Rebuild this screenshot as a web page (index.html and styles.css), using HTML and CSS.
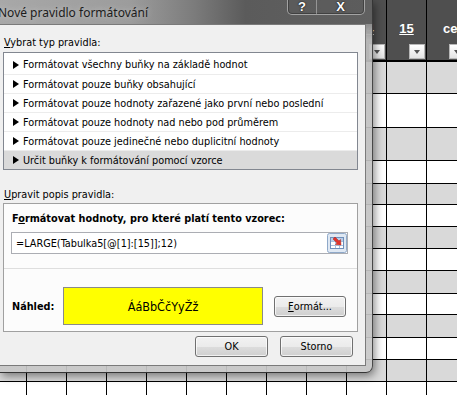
FILE: index.html
```html
<!DOCTYPE html>
<html lang="cs">
<head>
  <meta charset="UTF-8">
  <title>Nové pravidlo formátování</title>
  <link rel="stylesheet" href="styles.css">
</head>
<body>
  <!-- spreadsheet behind the dialog -->
  <div class="sheet">
    <div class="sheet-head">
      <div class="col-head">
        <span class="col-name">14</span>
        <span class="filter"></span>
      </div>
      <div class="col-head">
        <span class="col-name">15</span>
        <span class="filter"></span>
      </div>
      <div class="col-head wide">
        <span class="col-name">ce</span>
        <span class="filter"></span>
      </div>
    </div>
    <div class="row gray h32"></div>
    <div class="row white h34"></div>
    <div class="row gray h33"></div>
    <div class="row white h23"></div>
    <div class="row gray h21"></div>
    <div class="row white"></div>
    <div class="row gray"></div>
    <div class="row white"></div>
    <div class="row gray h23"></div>
    <div class="row white h21"></div>
    <div class="row gray h23"></div>
    <div class="row white"></div>
    <div class="row gray"></div>
    <div class="row white"></div>
  </div>

  <div class="dialog">
    <div class="titlebar">
      <span class="title">Nové pravidlo formátování</span>
      <div class="caption-btns">
        <span class="cap-btn help">?</span>
        <span class="cap-btn close">X</span>
      </div>
    </div>

    <div class="client">
      <div class="label"><u>V</u>ybrat typ pravidla:</div>
      <div class="rule-list">
        <div class="rule">Formátovat všechny buňky na základě hodnot</div>
        <div class="rule">Formátovat pouze buňky obsahující</div>
        <div class="rule">Formátovat pouze hodnoty zařazené jako první nebo poslední</div>
        <div class="rule">Formátovat pouze hodnoty nad nebo pod průměrem</div>
        <div class="rule">Formátovat pouze jedinečné nebo duplicitní hodnoty</div>
        <div class="rule selected">Určit buňky k formátování pomocí vzorce</div>
      </div>

      <div class="label second"><u>U</u>pravit popis pravidla:</div>
      <div class="group">
        <div class="group-title">F<u>o</u>rmátovat hodnoty, pro které platí tento vzorec:</div>
        <div class="formula">
          <span class="formula-text">=LARGE(Tabulka5[@[1]:[15]];12)</span>
          <span class="ref-btn">
            <svg width="20" height="20" viewBox="0 0 20 20">
              <rect x="0.5" y="0.5" width="19" height="19" rx="2" fill="#dfe8f3" stroke="#8fa9c9"/>
              <rect x="3.5" y="4.5" width="13" height="11" fill="#fff" stroke="#6f8fbb"/>
              <path d="M4 8.5h12M4 12.5h12" stroke="#a9c0dd"/>
              <path d="M8.5 5v10M12.5 5v10" stroke="#a9c0dd"/>
              <rect x="4" y="5" width="12" height="3" fill="#b9cde6"/>
              <path d="M6 6 L8 4 L12 8 L13.5 6.5 L14 12 L8.5 11.5 L10 10 Z" fill="#e0342c" stroke="#a8221c" stroke-width="0.5"/>
            </svg>
          </span>
        </div>
        <div class="separator"></div>
        <div class="preview-row">
          <span class="preview-label">Náhled:</span>
          <div class="preview">ÁáBbČčYyŽž</div>
          <button class="btn format-btn"><u>F</u>ormát...</button>
        </div>
      </div>

      <div class="actions">
        <button class="btn">OK</button>
        <button class="btn">Storno</button>
      </div>
    </div>
  </div>
</body>
</html>
```

FILE: styles.css
```css
* {
  box-sizing: border-box;
}
body {
  margin: 0;
  width: 457px;
  height: 395px;
  overflow: hidden;
  position: relative;
  background: #ffffff;
  font-family: "DejaVu Sans Condensed", "DejaVu Sans", sans-serif;
  font-stretch: condensed;
  font-size: 10.8px;
  color: #000000;
}

/* spreadsheet */
.sheet {
  width: 457px;
}
.sheet-head {
  display: flex;
  height: 62px;
  padding-left: 347px;
  border-bottom: 2px solid #000000;
  background: linear-gradient(90deg, #000000 0 1px, transparent 1px) 26px 0 / 40px 100% repeat-x, #4f4f4f;
}
.col-head {
  flex: none;
  width: 40px;
  display: flex;
  flex-direction: column;
  align-items: center;
  color: #ffffff;
  font: bold 13px "Liberation Sans", Arial, sans-serif;
}
.col-name {
  padding-top: 21px;
  padding-right: 1px;
  text-decoration: underline;
}
.col-head.wide {
  align-items: flex-start;
}
.col-head.wide .col-name {
  padding-left: 16px;
  text-decoration: none;
}
.filter {
  position: relative;
  margin-top: auto;
  margin-bottom: 1px;
  margin-right: 2px;
  align-self: flex-end;
  width: 16px;
  height: 15px;
  border: 1px solid #b8b8b8;
  background: linear-gradient(#ffffff, #e4e4e4);
}
.filter::after {
  content: "";
  position: absolute;
  left: 4px;
  top: 5px;
  border-left: 3.5px solid transparent;
  border-right: 3.5px solid transparent;
  border-top: 4px solid #555555;
}
.row {
  height: 22px;
  border-bottom: 1px solid #000000;
  background-image: linear-gradient(90deg, #000000 0 1px, transparent 1px);
  background-position: 26px 0;
  background-size: 40px 100%;
  background-repeat: repeat-x;
}
.row.gray {
  background-color: #d9d9d9;
}
.row.white {
  background-color: #ffffff;
}
.h21 { height: 21px; }
.h23 { height: 23px; }
.h32 { height: 32px; }
.h33 { height: 33px; }
.h34 { height: 34px; }

/* dialog window */
.dialog {
  position: absolute;
  left: 0;
  top: 0;
  width: 373px;
  padding: 0 7px 6px 0;
  border-right: 1px solid rgba(40, 40, 40, 0.8);
  border-bottom: 1px solid rgba(40, 40, 40, 0.8);
  border-radius: 0 0 7px 0;
  background: linear-gradient(180deg, #6a6a6a 0, #8e8e8e 24px, rgba(190, 190, 190, 0.92) 40px, rgba(200, 200, 200, 0.92) 100%);
  box-shadow: 2px 3px 8px rgba(0, 0, 0, 0.45);
}
.titlebar {
  position: relative;
  height: 24px;
  margin-right: -7px;
  background: linear-gradient(90deg, #a8a8a8 0, #9c9c9c 35%, #7c7c7c 52%, #5b5b5b 66%, #606060 100%);
}
.title {
  display: block;
  padding: 4px 0 0 0;
  margin-left: -2px;
  font: 12px "Noto Sans", "Open Sans", sans-serif;
  color: #1c1c1c;
  text-shadow: 0 0 6px rgba(255, 255, 255, 0.45);
}
.caption-btns {
  position: absolute;
  top: -1px;
  right: 7px;
  display: flex;
  height: 16px;
  border: 1px solid rgba(220, 220, 220, 0.55);
  border-top: 0;
  border-radius: 0 0 5px 5px;
  background: rgba(90, 90, 90, 0.35);
  box-shadow: inset 0 0 0 1px rgba(40, 40, 40, 0.5);
}
.cap-btn {
  display: flex;
  align-items: center;
  justify-content: center;
  height: 100%;
  font: bold 13px "Liberation Sans", Arial, sans-serif;
  color: #ffffff;
  text-shadow: 0 0 2px #222222, 0 0 1px #000000;
}
.cap-btn.help {
  width: 29px;
  border-right: 1px solid rgba(220, 220, 220, 0.45);
}
.cap-btn.close {
  width: 47px;
}

.client {
  width: 366px;
  padding: 11px 0 8px 3px;
  background: #f0f0f0;
  border-top: 1px solid #7a7a7a;
  border-right: 1px solid #7a7a7a;
  border-bottom: 1px solid #7a7a7a;
}
.label {
  line-height: 14px;
  padding-left: 1px;
}
.label.second {
  margin-top: 18px;
}
.rule-list {
  width: 355px;
  margin-top: 2px;
  padding-top: 2px;
  border: 1px solid #828790;
  background: #ffffff;
}
.rule {
  display: flex;
  align-items: center;
  gap: 4px;
  height: 19px;
  padding-left: 9px;
  border-top: 1px solid #ececec;
}
.rule:first-child {
  border-top: 0;
}
.rule::before {
  content: "";
  border-left: 6px solid #000000;
  border-top: 4px solid transparent;
  border-bottom: 4px solid transparent;
}
.rule.selected {
  background: #dadada;
}

.group {
  width: 355px;
  margin-top: 1px;
  padding: 8px 9px 6px 8px;
  border: 1px solid #a0a0a0;
  background: #fcfcfc;
}
.group-title {
  font-weight: bold;
  line-height: 14px;
}
.formula {
  display: flex;
  align-items: center;
  width: 337px;
  height: 22px;
  margin: 6px 0 0 -1px;
  padding-left: 4px;
  border: 1px solid #abadb3;
  background: #ffffff;
}
.ref-btn {
  display: flex;
  margin-left: auto;
}
.separator {
  height: 1px;
  margin: 14px -9px 0 -8px;
  background: #dedede;
}
.preview-row {
  display: flex;
  align-items: center;
  padding-top: 18px;
}
.preview-label {
  width: 51px;
  font-weight: bold;
}
.preview {
  display: flex;
  align-items: center;
  justify-content: center;
  width: 200px;
  height: 38px;
  border: 1px solid #8a8a8a;
  background: #ffff00;
  font-size: 12.5px;
}
.btn {
  display: flex;
  align-items: center;
  justify-content: center;
  height: 21px;
  padding: 0;
  border: 1px solid #707070;
  border-radius: 3px;
  background: linear-gradient(#f2f2f2 0, #ebebeb 50%, #dddddd 50%, #cfcfcf 100%);
  box-shadow: inset 0 0 0 1px rgba(255, 255, 255, 0.7);
  font: inherit;
  color: #000000;
}
.format-btn {
  width: 72px;
  margin-left: 11px;
}
.actions {
  display: flex;
  justify-content: flex-end;
  gap: 12px;
  margin-top: 4px;
  padding-right: 12px;
}
.actions .btn {
  width: 73px;
}
```
